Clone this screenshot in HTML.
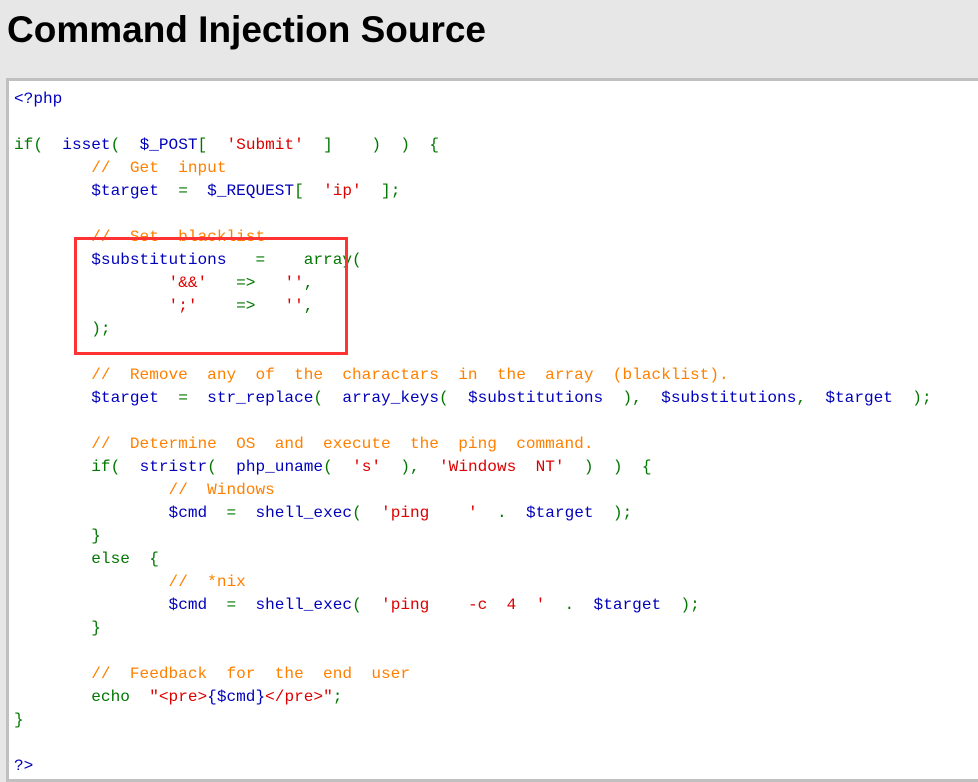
<!DOCTYPE html>
<html><head><meta charset="utf-8"><style>
body{margin:0;background:#e7e7e7;width:978px;height:782px;overflow:hidden;position:relative;font-family:"Liberation Sans",sans-serif}
h1{position:absolute;left:7px;top:9px;margin:0;font-size:37px;font-weight:bold;color:#000;letter-spacing:0}
.box{position:absolute;left:6px;top:78px;width:990px;height:698px;background:#fff;border:3px solid #c0c0c0}
pre{position:absolute;left:14px;top:88px;margin:0;font-family:"Liberation Mono",monospace;font-size:16.1px;line-height:23px;color:#0000bb;white-space:pre}
.k{color:#007700}.v{color:#0000bb}.s{color:#dd0000}.c{color:#ff8000}
.red{position:absolute;left:74px;top:237px;width:268px;height:112px;border:3px solid #ff3333}
</style></head><body>
<h1>Command Injection Source</h1>
<div class="box"></div>
<pre><span class="v">&lt;?php</span>

<span class="k">if(  </span><span class="v">isset</span><span class="k">(  </span><span class="v">$_POST</span><span class="k">[  </span><span class="s">'Submit'</span><span class="k">  ]    )  )  {</span>
        <span class="c">//  Get  input</span>
        <span class="v">$target  </span><span class="k">=  </span><span class="v">$_REQUEST</span><span class="k">[  </span><span class="s">'ip'</span><span class="k">  ];</span>

        <span class="c">//  Set  blacklist</span>
        <span class="v">$substitutions   </span><span class="k">=    array(</span>
                <span class="s">'&amp;&amp;'</span><span class="k">   =&gt;   </span><span class="s">''</span><span class="k">,</span>
                <span class="s">';'</span><span class="k">    =&gt;   </span><span class="s">''</span><span class="k">,</span>
        <span class="k">);</span>

        <span class="c">//  Remove  any  of  the  charactars  in  the  array  (blacklist).</span>
        <span class="v">$target  </span><span class="k">=  </span><span class="v">str_replace</span><span class="k">(  </span><span class="v">array_keys</span><span class="k">(  </span><span class="v">$substitutions  </span><span class="k">),  </span><span class="v">$substitutions</span><span class="k">,  </span><span class="v">$target  </span><span class="k">);</span>

        <span class="c">//  Determine  OS  and  execute  the  ping  command.</span>
        <span class="k">if(  </span><span class="v">stristr</span><span class="k">(  </span><span class="v">php_uname</span><span class="k">(  </span><span class="s">'s'</span><span class="k">  ),  </span><span class="s">'Windows  NT'</span><span class="k">  )  )  {</span>
                <span class="c">//  Windows</span>
                <span class="v">$cmd  </span><span class="k">=  </span><span class="v">shell_exec</span><span class="k">(  </span><span class="s">'ping    '</span><span class="k">  .  </span><span class="v">$target  </span><span class="k">);</span>
        <span class="k">}</span>
        <span class="k">else  {</span>
                <span class="c">//  *nix</span>
                <span class="v">$cmd  </span><span class="k">=  </span><span class="v">shell_exec</span><span class="k">(  </span><span class="s">'ping    -c  4  '</span><span class="k">  .  </span><span class="v">$target  </span><span class="k">);</span>
        <span class="k">}</span>

        <span class="c">//  Feedback  for  the  end  user</span>
        <span class="k">echo  </span><span class="s">"&lt;pre&gt;</span><span class="v">{$cmd}</span><span class="s">&lt;/pre&gt;"</span><span class="k">;</span>
<span class="k">}</span>

<span class="v">?&gt;</span></pre>
<div class="red"></div>
</body></html>
